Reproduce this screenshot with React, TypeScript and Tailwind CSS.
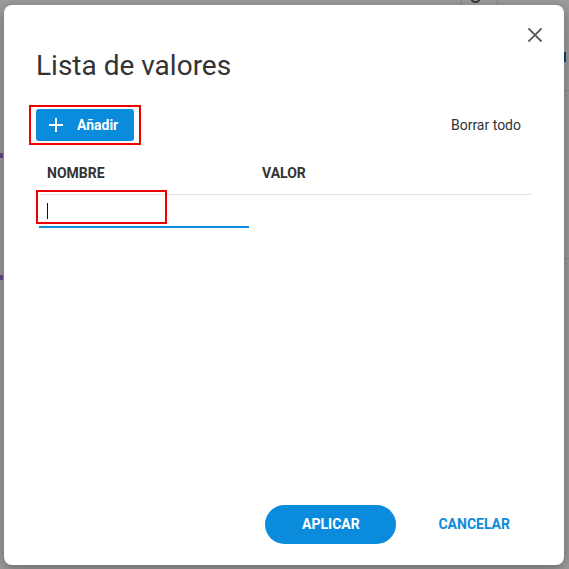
import React from "react";

function CloseIcon() {
    return (
        <svg width="14" height="14" viewBox="0 0 14 14" fill="none">
            <path d="M1 1L13 13M13 1L1 13" stroke="#5a5a5a" strokeWidth="1.8" strokeLinecap="square" />
        </svg>
    );
}

function PlusIcon() {
    return (
        <svg width="14" height="14" viewBox="0 0 14 14" fill="none">
            <path d="M7 0V14M0 7H14" stroke="#ffffff" strokeWidth="2" />
        </svg>
    );
}

// bits of the page behind the modal backdrop
function BehindPage() {
    return (
        <>
            <div className="absolute left-[461px] top-0 h-[5px] w-px bg-[#8a8a8a]" />
            <div className="absolute left-[497px] top-0 h-[5px] w-px bg-[#8a8a8a]" />
            <div className="absolute left-[470px] top-[-8px] h-[11px] w-[11px] rounded-full border-2 border-[#3a3a3a]" />
            <div className="absolute left-[564px] top-[52px] h-[10px] w-[2px] bg-[#0a4a7a]" />
            <div className="absolute left-[564px] top-[90px] h-px w-[5px] bg-[#8c8c8c]" />
            <div className="absolute left-[564px] top-[258px] h-px w-[5px] bg-[#8c8c8c]" />
            <div className="absolute left-0 top-[153px] h-[5px] w-[3px] bg-[#6a4b8a]" />
            <div className="absolute left-0 top-[275px] h-[5px] w-[3px] bg-[#6a4b8a]" />
        </>
    );
}

export default function App() {
    return (
        <div
            className="relative h-[569px] w-[569px] overflow-hidden bg-[#9e9e9e] pl-[4px] pt-[5px]"
            style={{ fontFamily: "Roboto, 'Liberation Sans', sans-serif" }}
        >
            <BehindPage />

            <div className="relative flex h-[560px] w-[560px] flex-col rounded-[8px] bg-white shadow-[0_4px_16px_rgba(0,0,0,0.35)]">
                <button className="absolute right-[22px] top-[23px] flex h-[14px] w-[14px] items-center justify-center">
                    <CloseIcon />
                </button>

                {/* Title */}
                <h2 className="mt-[45px] pl-[32px] text-[28px] font-normal leading-[32px] text-[#333333]">
                    Lista de valores
                </h2>

                {/* Toolbar */}
                <div className="mt-[23px] flex items-center justify-between pl-[25px] pr-[43px]">
                    <div className="border-2 border-[#ee0000] px-[5px] py-[2px]">
                        <button className="flex h-[32px] w-[98px] items-center gap-[14px] rounded-[3px] bg-[#0b8bdc] pl-[13px] text-[14px] font-bold text-white">
                            <PlusIcon />
                            <span>Añadir</span>
                        </button>
                    </div>
                    <button className="text-[14px] text-[#333333]">Borrar todo</button>
                </div>

                {/* Table */}
                <div className="ml-[35px] mr-[32px] mt-[8px]">
                    <div className="flex h-[42px] items-center border-b border-[#e4e4e4] text-[14px] font-bold text-[#333333]">
                        <div className="w-[215px] px-[8px]">NOMBRE</div>
                        <div className="px-[8px]">VALOR</div>
                    </div>
                    <div className="relative w-[210px]">
                        <div className="flex h-[33px] items-center border-b-2 border-[#0b8bdc] pl-[8px]">
                            <div className="h-[16px] w-px bg-[#111111]" />
                        </div>
                        <div className="absolute left-[-3px] top-[-5px] h-[34px] w-[131px] border-2 border-[#ee0000]" />
                    </div>
                </div>

                {/* Footer */}
                <div className="mt-auto mb-[21px] flex items-center justify-end pr-[54px]">
                    <button className="h-[39px] w-[131px] rounded-full bg-[#0b8bdc] text-[14px] font-bold text-white">
                        APLICAR
                    </button>
                    <button className="ml-[42px] text-[14px] font-bold text-[#0b8bdc]">CANCELAR</button>
                </div>
            </div>
        </div>
    );
}
